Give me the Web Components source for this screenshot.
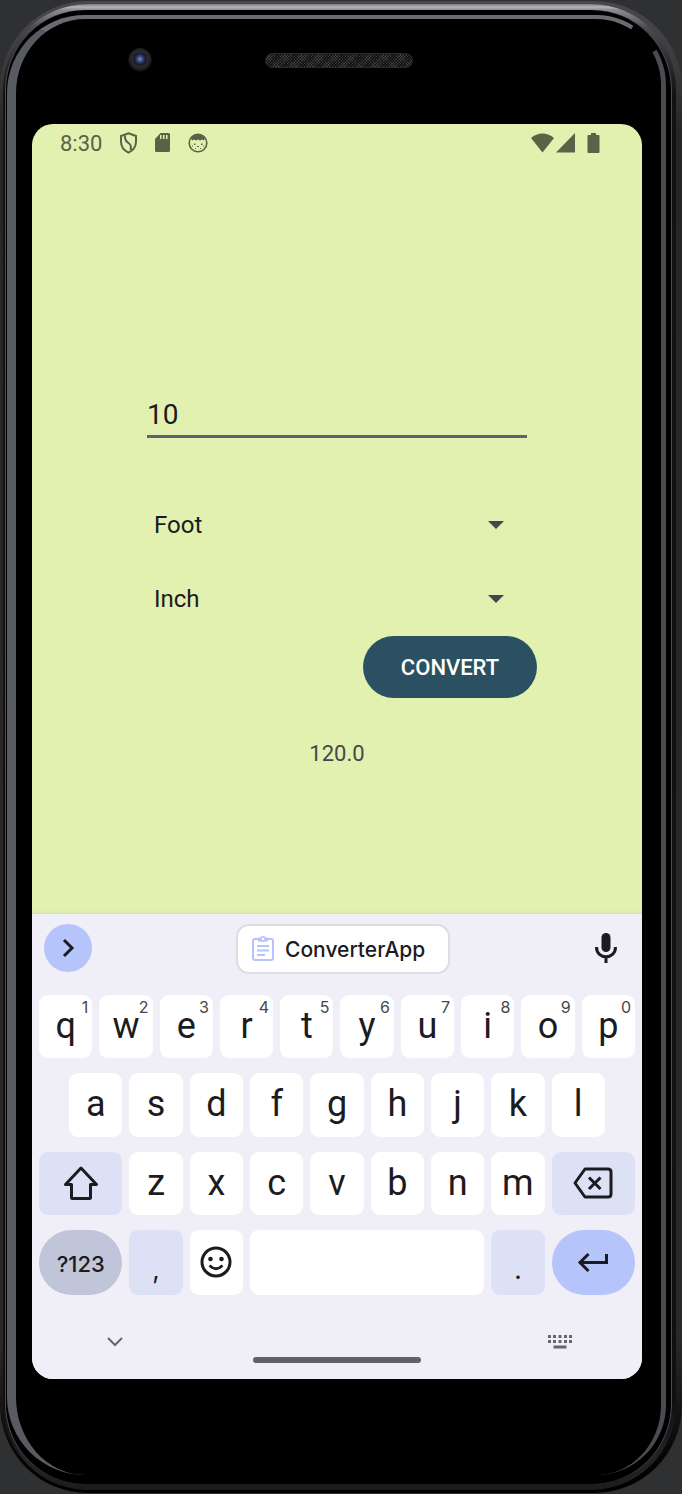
<!DOCTYPE html>
<html lang="en">
<head>
<meta charset="utf-8">
<meta name="viewport" content="width=device-width, initial-scale=1">
<title>ConverterApp</title>
<style>
  body { margin: 0; background: #2e3032; font-family: Roboto, "Liberation Sans", sans-serif; }
</style>
</head>
<body>
<phone-frame>
  <status-bar></status-bar>
  <unit-converter></unit-converter>
  <soft-keyboard></soft-keyboard>
</phone-frame>

<script>
const define = (name, html, setup) => {
  const template = document.createElement('template');
  template.innerHTML = html;
  customElements.define(name, class extends HTMLElement {
    constructor() {
      super();
      this.attachShadow({ mode: 'open' }).append(template.content.cloneNode(true));
    }
    connectedCallback() { if (setup) setup(this, this.shadowRoot); }
  });
};

/* Handset: metal rim, glass edge, camera, speaker and the screen */
define('phone-frame', `
<style>
  :host { display: block; padding: 1px 0; overflow: hidden; }
  .shell { padding: 3px 6px 3px 3px; border-radius: 88px;
    background: linear-gradient(#49484a 0, #3c3b3d 60px, #262628 130px, #2a2727 90%, #000 99%); }
  .rim { padding: 6px 4px 6px 2px; border-radius: 85px;
    background: linear-gradient(#77787b 0, #b4b5b9 3px, #8b8c90 6px, #4a4a4d 24px, #121213 90px, #101011 94%, #242425 98%, #1c1c1c 100%); }
  .groove { padding: 5px 5px 9px 1px; border-radius: 80px; background: #000;
    border: solid #4c4d50; border-width: 0 1px; }
  .glass { position: relative; padding: 0 19px 96px 16px; border: solid #67696f; border-width: 4px 5px 0 9px;
    border-color: #6b6c72 #4b4b51 #4b4b51 #585b61; border-radius: 78px 70px 70px 78px; background: #000; }
  .gap { position: absolute; top: -4px; right: -5px; width: 46px; height: 46px; }
  header { display: grid; grid-template-columns: 1fr auto 1fr; align-items: center; height: 82px; padding-bottom: 23px; margin: 0 -19px 0 -16px; }
  .camera { justify-self: center; width: 24px; height: 24px; border-radius: 50%;
    background: radial-gradient(circle at 50% 46%, #8d9cc0 0, #44568c 2px, #1b2547 5px, #14182a 6px, #2a2a2c 7px, #232324 10px, #0c0c0c 12px); }
  .speaker { width: 146px; height: 13px; border: 1px solid #29292b; border-radius: 8px;
    background: repeating-linear-gradient(45deg, #0006 0 1px, #0000 1px 2px), repeating-linear-gradient(-45deg, #3e403f 0 1px, #171918 1px 2px); }
  main { overflow: hidden; border-radius: 21px; background: #e2f0b0; }
</style>
<div class="shell"><div class="rim"><div class="groove"><div class="glass">
  <svg class="gap" viewBox="0 0 46 46" aria-hidden="true"><path d="M12 13A67.500 67.500 0 0 1 34.500 36" fill="none" stroke="#000" stroke-width="8"/></svg>
  <header><span class="camera"></span><span class="speaker"></span></header>
  <main><slot></slot></main>
</div></div></div></div>`);

define('status-bar', `
<style>
  :host { display: flex; align-items: center; height: 38px; padding: 0 42px 0 28px; color: #5d6146; font-size: 22px; }
  time { margin-right: 17px; }
  svg { display: block; fill: currentColor; }
  .left { display: flex; gap: 16px; align-items: center; flex: 1; }
  .right { display: flex; align-items: center; }
  .battery { margin-left: 11px; }
</style>
<time>8:30</time>
<div class="left">
  <svg width="19" height="22" viewBox="0 0 19 22"><path d="M9.500 1.300 L17 4 V9.500 C17 14.500 14 18.500 9.500 20.600 C5 18.500 2 14.500 2 9.500 V4Z" fill="none" stroke="currentColor" stroke-width="2"/><path d="M6 3.500 C5.500 8 7 9.500 9.500 11 C12 12.500 12.500 14.500 11.500 18" fill="none" stroke="currentColor" stroke-width="2"/></svg>
  <svg width="18" height="20" viewBox="0 0 18 20"><path fill-rule="evenodd" d="M6.500 0H14.500Q16 0 16 1.500V17.500Q16 19 14.500 19H2.500Q1 19 1 17.500V6ZM6 2V6H7.500V2ZM9 2V6H10.500V2ZM12 2V6H13.500V2Z"/></svg>
  <svg width="20" height="20" viewBox="0 0 20 20"><circle cx="10" cy="10" r="8.800" fill="none" stroke="currentColor" stroke-width="1.600"/><path d="M3 6 Q5 1 10 1 T17 6 L15.500 7.500 L14 6.500 L12 7.500 L10 6.500 L8 7.500 L6 6.500 L4.500 7.500Z"/><path d="M6 10.500h1.500v1.500H6zM13 10.500h1.500v1.500H13zM9 13h2v1H9zM4 12.500h1v1H4zM15 12.500h1v1h-1zM7 15h1v1H7zM12 15h1v1h-1z"/></svg>
</div>
<div class="right">
  <svg width="24" height="20" viewBox="0 0 24 20"><path d="M0 5 Q5 .500 11.500 .500 T23 5 L11.500 19.500Z"/></svg>
  <svg width="21" height="20" viewBox="0 0 21 20"><path d="M20 0V19.500H1Z"/></svg>
  <svg class="battery" width="13" height="21" viewBox="0 0 13 21"><path d="M4 0H9V2H11.500Q12.500 2 12.500 3V19Q12.500 20 11.500 20H1.500Q.500 20 .500 19V3Q.500 2 1.500 2H4Z"/></svg>
</div>`);

define('unit-select', `
<style>
  :host { display: grid; align-items: center; height: 74px; }
  select { grid-area: 1 / 1; width: 100%; height: 100%; margin: 0; padding: 0 50px 0 17px; border: 0; outline: 0;
    appearance: none; background: none; font: 24px Roboto, "Liberation Sans", sans-serif; color: #1d1b20; }
  svg { grid-area: 1 / 1; justify-self: end; margin-right: 33px; pointer-events: none; }
</style>
<select><option>Foot</option><option>Inch</option><option>Yard</option><option>Mile</option></select>
<svg width="16" height="8" viewBox="0 0 16 8" aria-hidden="true"><path d="M0 0H16L8 8Z" fill="#49454f"/></svg>`,
(host, root) => {
  const select = root.querySelector('select');
  select.value = host.getAttribute('value');
  select.setAttribute('aria-label', host.getAttribute('label'));
});

define('unit-converter', `
<style>
  :host { display: block; padding: 226px 24px 146px; }
  form { display: flex; flex-direction: column; max-width: 400px; margin: 0 auto; }
  input { box-sizing: border-box; height: 50px; margin: 0 10px 50px; padding: 5px 0 0; border: 0; border-bottom: 3px solid #665e70;
    border-radius: 0; outline: 0; background: none; font: 28px Roboto, "Liberation Sans", sans-serif; color: #1d1b20; }
  button { align-self: flex-end; width: 174px; height: 62px; padding: 0; border: 0; border-radius: 31px; background: #2b5062;
    color: #fff; font: 500 22px Roboto, "Liberation Sans", sans-serif; }
  output { margin-top: 42px; text-align: center; font-size: 22px; line-height: 28px; color: #49454f; }
</style>
<form>
  <input type="text" inputmode="decimal" aria-label="Value" value="10">
  <unit-select label="From" value="Foot"></unit-select>
  <unit-select label="To" value="Inch"></unit-select>
  <button type="button">CONVERT</button>
  <output>120.0</output>
</form>`,
(host, root) => {
  const inches = { Foot: 12, Inch: 1, Yard: 36, Mile: 63360 };
  root.querySelector('button').addEventListener('click', () => {
    const [from, to] = [...root.querySelectorAll('unit-select')].map(u => inches[u.shadowRoot.querySelector('select').value]);
    const result = parseFloat(root.querySelector('input').value) * from / to;
    root.querySelector('output').textContent = Number.isInteger(result) ? result.toFixed(1) : String(result);
  });
});

define('kb-key', `
<style>
  :host { display: block; position: relative; grid-column: span 2; }
  :host([wide]) { grid-column: span 3; }
  :host([space]) { grid-column: span 8; }
  :host([indent]) { grid-column: 2 / span 2; }
  button { display: flex; align-items: center; justify-content: center; width: 100%; height: 100%; padding: 0 0 2px; border: 0;
    border-radius: 9px; background: #fff; color: #1b1b20; font: 36px Roboto, "Noto Sans", sans-serif; }
  :host([tone="soft"]) button { background: #dde1f6; }
  :host([tone="mode"]) button { background: #c1c5da; border-radius: 33px; font: 500 22px Inter, "Noto Sans", sans-serif; padding: 2px 0 0; }
  :host([tone="enter"]) button { background: #b5c4fa; border-radius: 33px; }
  :host([low]) button { font: 26px Inter, "Noto Sans", sans-serif; padding: 14px 0 0; }
  .hint { position: absolute; top: 3px; right: 4px; font: 16px/18px Inter, "Noto Sans", sans-serif; color: #45454b; pointer-events: none; }
</style>
<button type="button"><slot></slot></button>`,
(host, root) => {
  const label = host.getAttribute('label');
  if (label) root.querySelector('button').setAttribute('aria-label', label);
  const hint = host.getAttribute('hint');
  if (hint) {
    const span = document.createElement('span');
    span.className = 'hint';
    span.textContent = hint;
    root.append(span);
  }
});

define('soft-keyboard', `
<style>
  :host { display: block; background: #f0eff7; box-shadow: 0 0 4px #0002; font-family: Inter, "Noto Sans", sans-serif; color: #1b1b20; }
  svg { display: block; }
  button { padding: 0; border: 0; background: none; color: inherit; }
  .tools { display: grid; grid-template-columns: 1fr auto 1fr; align-items: center; height: 50px; padding: 10px 0 21px 12px; }
  .expand { display: grid; place-items: center; width: 48px; height: 48px; margin-bottom: 2px; border-radius: 50%; background: #b5c4fa; }
  .clip { display: flex; align-items: center; gap: 10px; box-sizing: border-box; width: 214px; height: 50px; padding-left: 13px;
    border: 2px solid #dcdce1; border-radius: 13px; background: #fff; font: 500 21px Inter, "Noto Sans", sans-serif; }
  .mic { justify-self: end; margin: 0 24px 2px 0; }
  .keys { display: grid; grid-template-columns: repeat(20, 1fr); grid-template-rows: 63px 64px 63px 65px; gap: 15px 7px; padding: 0 7px; }
  .end { grid-column: span 1; }
  .nav { display: grid; grid-template-columns: 1fr auto 1fr; align-items: center; height: 84px; color: #67666b; }
  .hide { justify-self: start; margin: 10px 0 0 75px; }
  .home { width: 168px; height: 6px; margin-top: 46px; border-radius: 3px; background: #626166; }
  .switch { justify-self: end; margin: 10px 69px 0 0; }
</style>
<div class="tools">
  <button class="expand" type="button" aria-label="More tools"><svg width="14" height="20" viewBox="0 0 14 20"><path d="M3 2L11 10L3 18" fill="none" stroke="currentColor" stroke-width="3"/></svg></button>
  <button class="clip" type="button">
    <svg width="24" height="28" viewBox="0 0 24 28" fill="none" stroke="#b5c4fa" stroke-width="2"><rect x="2" y="4" width="20" height="21" rx="2"/><path d="M6 11H18M6 15.500H18M6 20H14"/><path d="M7 4.500H17" stroke-width="4"/><circle cx="12" cy="4" r="3" fill="#b5c4fa" stroke="none"/><circle cx="12" cy="4" r="1.300" fill="#fff" stroke="none"/></svg>
    <span>ConverterApp</span>
  </button>
  <button class="mic" type="button" aria-label="Voice input"><svg width="24" height="30" viewBox="0 0 24 30"><rect x="7.500" y="0" width="9" height="19" rx="4.500" fill="currentColor"/><path d="M2.500 14C2.500 27 21.500 27 21.500 14M12 23V30" fill="none" stroke="currentColor" stroke-width="3"/></svg></button>
</div>
<div class="keys">
  <kb-key hint="1">q</kb-key><kb-key hint="2">w</kb-key><kb-key hint="3">e</kb-key><kb-key hint="4">r</kb-key><kb-key hint="5">t</kb-key><kb-key hint="6">y</kb-key><kb-key hint="7">u</kb-key><kb-key hint="8">i</kb-key><kb-key hint="9">o</kb-key><kb-key hint="0">p</kb-key>
  <kb-key indent>a</kb-key><kb-key>s</kb-key><kb-key>d</kb-key><kb-key>f</kb-key><kb-key>g</kb-key><kb-key>h</kb-key><kb-key>j</kb-key><kb-key>k</kb-key><kb-key>l</kb-key><span class="end"></span>
  <kb-key wide tone="soft" label="Shift"><svg width="36" height="34" viewBox="0 0 36 34"><path d="M18 2L33.500 18.500H27.500V31.500Q27.500 32.500 26.500 32.500H9.500Q8.500 32.500 8.500 31.500V18.500H2.500Z" fill="none" stroke="currentColor" stroke-width="3" stroke-linejoin="round"/></svg></kb-key>
  <kb-key>z</kb-key><kb-key>x</kb-key><kb-key>c</kb-key><kb-key>v</kb-key><kb-key>b</kb-key><kb-key>n</kb-key><kb-key>m</kb-key>
  <kb-key wide tone="soft" label="Delete"><svg width="40" height="32" viewBox="0 0 40 32"><path d="M12 2H35Q38 2 38 5V27Q38 30 35 30H12L2 16Z M16 10.500L27.500 22M27.500 10.500L16 22" fill="none" stroke="currentColor" stroke-width="3" stroke-linejoin="round"/></svg></kb-key>
  <kb-key wide tone="mode">?123</kb-key><kb-key tone="soft" low>,</kb-key>
  <kb-key label="Emoji"><svg width="32" height="32" viewBox="0 0 32 32"><circle cx="16" cy="16" r="14" fill="none" stroke="currentColor" stroke-width="3"/><circle cx="10.500" cy="13" r="2.300" fill="currentColor"/><circle cx="21.500" cy="13" r="2.300" fill="currentColor"/><path d="M9.500 19.500Q16 26 22.500 19.500" fill="none" stroke="currentColor" stroke-width="2.600"/></svg></kb-key>
  <kb-key space label="Space"></kb-key><kb-key tone="soft" low>.</kb-key>
  <kb-key wide tone="enter" label="Enter"><svg width="32" height="20" viewBox="0 0 32 20"><path d="M29.500 2V10.500H3M11.500 2L3 10.500L11.500 19" fill="none" stroke="currentColor" stroke-width="3"/></svg></kb-key>
</div>
<div class="nav">
  <button class="hide" type="button" aria-label="Hide keyboard"><svg width="16" height="10" viewBox="0 0 16 10"><path d="M1 1L8 8L15 1" fill="none" stroke="currentColor" stroke-width="2"/></svg></button>
  <span class="home"></span>
  <button class="switch" type="button" aria-label="Switch keyboard"><svg width="25" height="14" viewBox="0 0 25 14" fill="currentColor"><path d="M0 0h3v3H0zM5 0h3v3H5zM10.500 0h3v3h-3zM16 0h3v3h-3zM21 0h3v3h-3zM0 5h3v3H0zM5 5h3v3H5zM10.500 5h3v3h-3zM16 5h3v3h-3zM21 5h3v3h-3zM5.500 10.500h13v3h-13z"/></svg></button>
</div>`);
</script>
</body>
</html>
